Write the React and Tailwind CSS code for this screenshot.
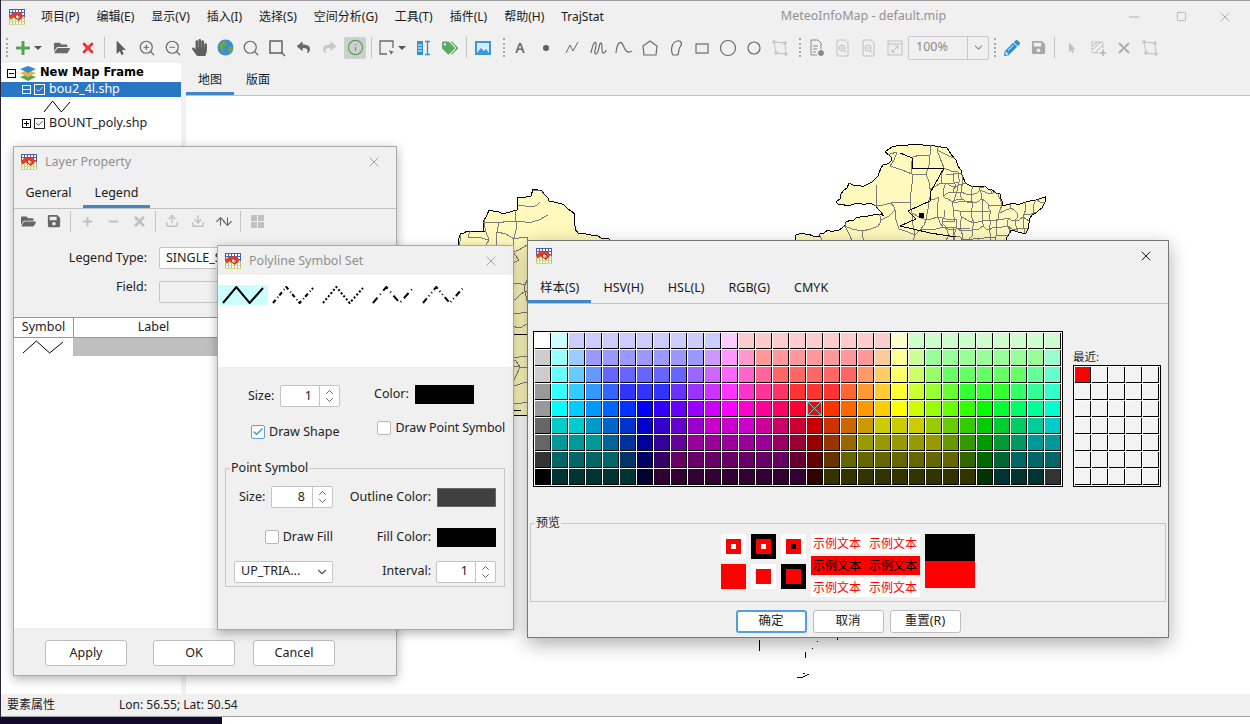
import {
  FaFolderOpen, FaSave, FaHandPaper, FaTags, FaPencilAlt, FaTimes, FaPlus, FaMinus, FaMousePointer, FaReply, FaShare,
} from "react-icons/fa";
import { ZoomIn, ZoomOut, Search, Info, X, Minus, Square, ChevronDown, ChevronUp, Check, ArrowUp, ArrowDown, Upload, Download } from "lucide-react";

const PALETTE = [
  "fff cff ccf ccf ccf ccf ccf ccf ccf ccf ccf fcf fcc fcc fcc fcc fcc fcc fcc fcc fcc ffc cfc cfc cfc cfc cfc cfc cfc cfc cfc",
  "ccc 9ff 9cf 99f 99f 99f 99f 99f 99f 99f c9f f9f f9c f99 f99 f99 f99 f99 f99 f99 fc9 ff9 cf9 9f9 9f9 9f9 9f9 9f9 9f9 9f9 9fc",
  "ccc 6ff 6cf 69f 66f 66f 66f 66f 66f 96f c6f f6f f6c f69 f66 f66 f66 f66 f66 f96 fc6 ff6 cf6 9f6 6f6 6f6 6f6 6f6 6f6 6f9 6fc",
  "999 3ff 3cf 39f 36f 33f 33f 33f 63f 93f c3f f3f f3c f39 f36 f33 f33 f33 f63 f93 fc3 ff3 cf3 9f3 6f3 3f3 3f3 3f3 3f6 3f9 3fc",
  "999 0ff 0cf 09f 06f 03f 00f 30f 60f 90f c0f f0f f0c f09 f06 f03 f00 f30 f60 f90 fc0 ff0 cf0 9f0 6f0 3f0 0f0 0f3 0f6 0f9 0fc",
  "666 0cc 0cc 09c 06c 03c 00c 30c 60c 90c c0c c0c c0c c09 c06 c03 c00 c30 c60 c90 cc0 cc0 cc0 9c0 6c0 3c0 0c0 0c3 0c6 0c9 0cc",
  "666 099 099 099 069 039 009 309 609 909 909 909 909 909 906 903 900 930 960 990 990 990 990 990 690 390 090 093 096 099 099",
  "333 066 066 066 066 036 006 306 606 606 606 606 606 606 606 603 600 630 660 660 660 660 660 660 660 360 060 063 066 066 066",
  "000 033 033 033 033 033 003 303 303 303 303 303 303 303 303 303 300 330 330 330 330 330 330 330 330 330 030 033 033 033 333",
].map((r) => r.split(" "));

function AppIcon() {
  const top = [0, 3, 6, 9, 12, 15];
  return (
    <svg width="16" height="16" viewBox="0 0 16 16" className="shrink-0">
      <rect width="16" height="16" fill="#fff" />
      {top.map((v) => (
        <g key={v}>
          <path d={`M${v + 0.5} 0V8`} stroke="#4a5fb0" />
          <path d={`M${v + 0.5} 8V16`} stroke="#b5c47a" />
          <path d={`M0 ${v + 0.5}H16`} stroke={v < 8 ? "#4a5fb0" : "#d3d97c"} />
        </g>
      ))}
      <path d="M0.500 9C0.500 5 4 3 7 4L10 2.500L15 7L10 12L7 10L5 8.500L3 9L2 11Z" fill="#ea3a22" />
      <path d="M8 5.500L11.500 8L9 10.500L6 8Z" fill="#fff" stroke="#6b2a12" strokeWidth="0.800" />
      <path d="M8.500 7.500h1.500v1.500H8.500z" fill="#f28a2c" />
    </svg>
  );
}

function Grip() {
  return <div className="h-[19px] border-l-2 border-dotted border-[#a8a8a8]" />;
}

function Slot({ children, className = "" }) {
  return <div className={`w-[26px] h-full flex items-center justify-center shrink-0 ${className}`}>{children}</div>;
}

function Sep() {
  return (
    <div className="w-[6px] h-full flex items-center justify-center shrink-0">
      <div className="w-px h-[21px] bg-[#c4c4c4]" />
    </div>
  );
}

function Caret() {
  return <div className="w-0 h-0 border-x-[4px] border-x-transparent border-t-[4px] border-t-[#555]" />;
}

function Shape({ children, color = "#6a6a6a", width = 1.2, w = 18 }) {
  return (
    <svg width={w} height="18" viewBox="0 0 18 18" fill="none" stroke={color} strokeWidth={width}>
      {children}
    </svg>
  );
}

function Toolbar() {
  const dis = "#c0c0c0";
  return (
    <div className="h-[31px] flex items-center shrink-0 bg-[#f0f0f0]">
      <div className="w-[12px] pl-[5px] flex items-center"><Grip /></div>
      <div className="w-[36px] h-full flex items-center gap-[3px] pl-[2px]">
        <FaPlus className="text-[#52a552] text-[16px]" />
        <Caret />
      </div>
      <Slot><FaFolderOpen className="text-[#6a6a6a] text-[16px]" /></Slot>
      <Slot><FaTimes className="text-[#e5383b] text-[16px]" /></Slot>
      <Sep />
      <Slot className="ml-[1px]"><FaMousePointer className="text-[#5f5f5f] text-[14px]" /></Slot>
      <Slot><ZoomIn size={18} color="#6a6a6a" strokeWidth={1.6} /></Slot>
      <Slot><ZoomOut size={18} color="#6a6a6a" strokeWidth={1.6} /></Slot>
      <Slot><FaHandPaper className="text-[#5f5f5f] text-[17px]" /></Slot>
      <Slot>
        <svg width="17" height="17" viewBox="0 0 17 17">
          <circle cx="8.500" cy="8.500" r="8" fill="#3d8fd1" />
          <path d="M3 4l4-2 3 2-1 3-3 1 1 3-2 2-2-4zM11 8l4-1 1 3-3 4-2-2z" fill="#6da544" />
        </svg>
      </Slot>
      <Slot><Search size={18} color="#6a6a6a" strokeWidth={1.6} /></Slot>
      <Slot>
        <Shape color="#6a6a6a" width="1.6">
          <rect x="2" y="2" width="12" height="12" />
          <path d="M13 13l4 4" />
        </Shape>
      </Slot>
      <Slot><FaReply className="text-[#6a6a6a] text-[13px]" /></Slot>
      <Slot><FaShare className="text-[#c8c8c8] text-[13px]" /></Slot>
      <Slot><div className="w-[22px] h-[22px] rounded-[2px] bg-[#cfcfcf] flex items-center justify-center"><Info size={17} color="#52a552" strokeWidth={1.7} /></div></Slot>
      <Sep />
      <div className="w-[37px] h-full flex items-center gap-[2px] pl-[4px] shrink-0">
        <Shape color="#6a6a6a" width="1.3">
          <path d="M9 15H2V2h13v7" />
          <path d="M11 11l5 2-2 1-1 2z" fill="#6a6a6a" stroke="none" />
        </Shape>
        <Caret />
      </div>
      <Slot>
        <svg width="14" height="16" viewBox="0 0 14 16">
          <rect x="0" y="1" width="6" height="14" fill="#2f8fd0" />
          <path d="M1 5h4M1 8h4M1 11h4" stroke="#fff" />
          <path d="M8 1.500h5M8 14.500h5M10.500 2v12" stroke="#2f8fd0" strokeWidth="1.300" />
        </svg>
      </Slot>
      <Slot><FaTags className="text-[#5fa85f] text-[16px]" /></Slot>
      <Sep />
      <Slot className="ml-[1px]">
        <svg width="16" height="14" viewBox="0 0 16 14">
          <rect width="16" height="14" fill="#3c98d6" />
          <rect x="2" y="2" width="12" height="10" fill="#d6ecf9" />
          <path d="M2 12l4-5 3 3 2-2 3 4z" fill="#3c98d6" />
        </svg>
      </Slot>
      <div className="w-[11px] pl-[7px] shrink-0"><Grip /></div>
      <Slot><span className="text-[14px] font-semibold text-[#6a6a6a]">A</span></Slot>
      <Slot><div className="w-[6px] h-[6px] rounded-full bg-[#606060]" /></Slot>
      <Slot><Shape width="1"><path d="M3 14L7 6l3 6 5-9" /></Shape></Slot>
      <Slot><Shape><path d="M2 14C4 4 6 2 7 4s-3 11 0 11 3-12 5-11 0 10 2 10 3-2 3-3" /></Shape></Slot>
      <Slot><Shape><path d="M1 14C2 3 6 1 8 6s4 9 9 6" /></Shape></Slot>
      <Slot><Shape><path d="M9 2l7 5-1 9H3L2 7z" /></Shape></Slot>
      <Slot><Shape><path d="M6 16C3 11 5 3 10 2c4-1 6 2 3 6s0 8-3 8z" /></Shape></Slot>
      <Slot><Shape><rect x="3" y="5" width="12" height="9" /></Shape></Slot>
      <Slot><Shape><circle cx="9" cy="9" r="7.500" /></Shape></Slot>
      <Slot><Shape><circle cx="9" cy="9" r="6" /></Shape></Slot>
      <Slot><Shape color={dis} width="1"><path d="M3 3l11 1 1 11-10-1z" /><rect x="2" y="2" width="2" height="2" /><rect x="13" y="3" width="2" height="2" /><rect x="14" y="14" width="2" height="2" /><rect x="4" y="13" width="2" height="2" /></Shape></Slot>
      <div className="w-[11px] pl-[6px] shrink-0"><Grip /></div>
      <Slot><Shape color="#8a8a8a" width="1"><path d="M3 1h7l3 3v6M3 1v15h6" /><path d="M5 7h5M5 10h4M5 13h3" /><circle cx="13" cy="14" r="2.500" fill="#8a8a8a" /></Shape></Slot>
      <Slot><Shape color={dis} width="1"><path d="M3 1h8l3 3v13H3z" /><circle cx="8" cy="9" r="3" /><path d="M6.500 9h3M8 7.500v3M10 11l2 3" /></Shape></Slot>
      <Slot><Shape color={dis} width="1"><path d="M3 1h8l3 3v13H3z" /><circle cx="8" cy="9" r="3" /><path d="M6.500 9h3M10 11l2 3" /></Shape></Slot>
      <Slot><Shape color={dis} width="1"><rect x="2" y="2" width="14" height="14" /><path d="M2 5h14M6 13l6-6M9 7h3v3M6 10v3h3" /></Shape></Slot>
      <div className="w-[81px] h-[24px] border border-[#c8c8c8] rounded-[2px] flex items-center shrink-0">
        <span className="flex-1 pl-[7px] text-[12.5px] text-[#8c8c8c]">100%</span>
        <div className="w-[21px] h-full border-l border-[#c8c8c8] flex items-center justify-center"><ChevronDown size={13} color="#8c8c8c" /></div>
      </div>
      <div className="w-[10px] pl-[5px] shrink-0"><Grip /></div>
      <Slot><FaPencilAlt className="text-[#2f8fd0] text-[16px]" /></Slot>
      <Slot><FaSave className="text-[#a8a8a8] text-[15px]" /></Slot>
      <Sep />
      <Slot className="ml-[2px]"><FaMousePointer className="text-[#c0c0c0] text-[10px]" /></Slot>
      <Slot><Shape color="#b8b8b8" width="1"><rect x="3" y="3" width="11" height="11" strokeDasharray="2 1" /><path d="M3 7l6-4M3 11l9-8M6 14l8-8" /><path d="M14 11v6M11 14h6" strokeWidth="1.600" /></Shape></Slot>
      <Slot><X size={18} color="#ababab" strokeWidth={2.4} /></Slot>
      <Slot><Shape color={dis} width="1"><path d="M3 3l11 1 1 11-10-1z" /><rect x="2" y="2" width="2" height="2" /><rect x="13" y="3" width="2" height="2" /><rect x="14" y="14" width="2" height="2" /><rect x="4" y="13" width="2" height="2" /></Shape></Slot>
    </div>
  );
}

function Tabs({ items, active = 0, h = "h-[31px]", pad = "px-3", size = "text-[12.5px]" }) {
  return (
    <div className={`${h} flex border-b border-[#c2c2c2] shrink-0`}>
      {items.map((t, i) => (
        <div key={t} className={`${pad} ${size} h-full flex items-center text-[#1a1a1a] ${i === active ? "border-b-[3px] border-[#4087c8] pt-[5px] -mb-px" : "pt-[2px]"}`}>
          {t}
        </div>
      ))}
    </div>
  );
}

function Zig({ w, h, dash, sw = 1, color = "#000" }) {
  const a = w / 3;
  return (
    <svg width={w + 2} height={h + 2} viewBox={`-1 -1 ${w + 2} ${h + 2}`} className="shrink-0">
      <polyline points={`0,${h} ${a},0 ${2 * a},${h} ${w},1`} fill="none" stroke={color} strokeWidth={sw} strokeDasharray={dash} />
    </svg>
  );
}

function Spinner({ value, w }) {
  return (
    <div className={`${w} h-[22px] bg-white border border-[#c4c4c4] rounded-[2px] flex shrink-0`}>
      <div className="flex-1 flex items-center justify-end pr-[7px] text-[12.5px]">{value}</div>
      <div className="w-[20px] border-l border-[#c4c4c4] flex flex-col items-center justify-center">
        <ChevronUp size={13} color="#666" className="-mb-[2px]" />
        <ChevronDown size={13} color="#666" className="-mt-[2px]" />
      </div>
    </div>
  );
}

function CheckBox({ checked, label, className = "" }) {
  return (
    <div className={`flex items-center gap-[4px] text-[12.5px] text-[#222] ${className}`}>
      <div className={`w-[14px] h-[14px] bg-white rounded-[2px] border flex items-center justify-center ${checked ? "border-[#5a9fe0]" : "border-[#b8b8b8]"}`}>
        {checked && <Check size={12} color="#4a94dc" strokeWidth={3} />}
      </div>
      <span>{label}</span>
    </div>
  );
}

function TreeBox({ open }) {
  return (
    <div className="w-[9px] h-[9px] border border-black relative shrink-0 bg-white">
      <div className="absolute left-[1px] right-[1px] top-[3px] h-px bg-black" />
      {!open && <div className="absolute top-[1px] bottom-[1px] left-[3px] w-px bg-black" />}
    </div>
  );
}

function TreeCheck() {
  return (
    <div className="w-[11px] h-[11px] border border-[#222] bg-white flex items-center justify-center shrink-0">
      <Check size={9} color="#111" strokeWidth={2} />
    </div>
  );
}

function Tree() {
  return (
    <div className="w-[180px] bg-white text-[12.5px] shrink-0 pt-[1px]">
      <div className="h-[18px] flex items-center pl-[6px]">
        <TreeBox open />
        <svg width="16" height="15" viewBox="0 0 16 15" className="ml-[4px] shrink-0">
          <path d="M8 8l8 3-8 4-8-4z" fill="#5aa55a" />
          <path d="M8 4l8 3-8 4-8-4z" fill="#f2b134" />
          <path d="M8 0l8 3-8 4-8-4z" fill="#2f8fd0" />
        </svg>
        <span className="ml-[4px] font-bold text-black [font-family:'DejaVu_Sans',sans-serif] text-[11.5px]">New Map Frame</span>
      </div>
      <div className="h-[15px] bg-[#2777c5] flex items-center pl-[21px]">
        <div className="border border-white"><div className="w-[7px] h-[7px] relative"><div className="absolute left-0 right-0 top-[3px] h-px bg-white" /></div></div>
        <div className="ml-[3px] w-[11px] h-[11px] border border-white flex items-center justify-center"><Check size={9} color="#fff" strokeWidth={2} /></div>
        <span className="ml-[4px] text-white">bou2_4l.shp</span>
      </div>
      <div className="h-[18px] flex items-center pl-[42px]"><Zig w={26} h={11} /></div>
      <div className="h-[17px] flex items-center pl-[21px]">
        <TreeBox />
        <div className="ml-[3px]"><TreeCheck /></div>
        <span className="ml-[4px] text-[#222]">BOUNT_poly.shp</span>
      </div>
    </div>
  );
}

// noisy outline and province mesh for the map drawing
function makeRand(seed) {
  let s = seed;
  return () => {
    s = (Math.imul(s, 1103515245) + 12345) & 0x7fffffff;
    return (s >> 8) / 0x7fffff;
  };
}

const toPage = ([x, y]) => [460 + x * 0.3827, 135 + y / 3];

function rough(points, seed) {
  const r = makeRand(seed);
  const out = [];
  points.map(toPage).forEach((p, i, all) => {
    const q = all[(i + 1) % all.length];
    const n = Math.max(1, Math.round(Math.hypot(q[0] - p[0], q[1] - p[1]) / 4));
    for (let k = 0; k < n; k++) {
      const t = k / n;
      out.push(`${Math.round(p[0] + (q[0] - p[0]) * t + r() * 2 - 1)},${Math.round(p[1] + (q[1] - p[1]) * t + r() * 2 - 1)}`);
    }
  });
  return out.join(" ");
}

function mesh(x0, y0, x1, y1, s, seed, skip = 0.2) {
  const r = makeRand(seed);
  const pts = {};
  const at = (i, j) => {
    const k = `${i}_${j}`;
    if (!pts[k]) pts[k] = [x0 + i * s + (r() - 0.5) * s * 0.7, y0 + j * s + (r() - 0.5) * s * 0.7];
    return pts[k];
  };
  let d = "";
  for (let i = 0; i * s < x1 - x0; i++) {
    for (let j = 0; j * s < y1 - y0; j++) {
      const a = at(i, j);
      [at(i + 1, j), at(i, j + 1)].forEach((b) => {
        if (r() > skip) {
          const mx = (a[0] + b[0]) / 2 + r() * 3 - 1.5;
          const my = (a[1] + b[1]) / 2 + r() * 3 - 1.5;
          d += `M${a[0].toFixed(0)} ${a[1].toFixed(0)}L${mx.toFixed(0)} ${my.toFixed(0)}L${b[0].toFixed(0)} ${b[1].toFixed(0)}`;
        }
      });
    }
  }
  return d;
}

const RIGHT_SHAPE = [[875,315],[880,298],[900,295],[935,305],[960,288],[990,285],[1010,262],[1045,245],[1080,240],[1108,240],[1095,222],[1075,205],[1040,205],[1020,212],[990,210],[985,200],[1015,145],[1050,155],[1085,135],[1100,100],[1130,75],[1112,50],[1130,35],[1150,30],[1210,27],[1270,40],[1295,75],[1308,105],[1325,150],[1370,155],[1410,180],[1415,210],[1465,205],[1530,188],[1518,220],[1490,250],[1480,295],[1440,285],[1420,330],[875,330]];
const LEFT_SHAPE = [[-5,330],[0,295],[40,288],[60,290],[58,270],[78,225],[130,235],[150,225],[150,190],[185,180],[190,165],[215,168],[235,195],[275,210],[300,240],[298,270],[305,295],[340,298],[390,310],[400,360],[260,840],[100,840],[-5,500]];

function MapView() {
  return (
    <svg viewBox="186 96 1064 598" className="absolute inset-0 w-full h-full" shapeRendering="crispEdges">
      <defs>
        <clipPath id="clipRight"><polygon points={rough(RIGHT_SHAPE, 7)} /></clipPath>
        <clipPath id="clipLeft"><polygon points={rough(LEFT_SHAPE, 11)} /></clipPath>
      </defs>
      <polygon points={rough(LEFT_SHAPE, 11)} fill="#fff9bd" stroke="#000" />
      <g clipPath="url(#clipLeft)" fill="none">
        <path d={mesh(440, 190, 540, 420, 15, 21, 0.3)} stroke="#7c7c7c" />
        <path d="M510 334H530M513 410h8" stroke="#000" />
      </g>
      <polygon points={rough(RIGHT_SHAPE, 7)} fill="#fff9bd" stroke="#000" />
      <g clipPath="url(#clipRight)" fill="none">
        <path d={mesh(820, 140, 960, 250, 15, 5, 0.3)} stroke="#7c7c7c" />
        <path d={mesh(945, 175, 1050, 250, 9, 9, 0.1)} stroke="#7c7c7c" />
        <path d="M900 153l12 5v10h32l-14 25v8l-22 10 8 8-16 7 30 7 26 4" stroke="#000" />
        <rect x="919" y="213" width="4" height="4" fill="#000" stroke="#000" />
      </g>
      <path d="M759.500 640v11M817 641h1M838 638l-1 2M812 648h1M805 652l1 3-1 3M797 678l6-1 6-3M803 673l2 1" stroke="#000" fill="none" />
    </svg>
  );
}

function DialogButton({ w, h = "h-[26px]", children, primary }) {
  return (
    <div className={`${w} ${h} bg-white rounded-[3px] flex items-center justify-center text-[12.5px] text-[#222] ${primary ? "border-2 border-[#4f9ee6]" : "border border-[#bdbdbd]"}`}>
      {children}
    </div>
  );
}

function LayerProperty() {
  return (
    <div className="absolute left-[13px] top-[146px] w-[384px] h-[530px] bg-[#f0f0f0] border border-[#a8a8a8] shadow-[0_3px_10px_rgba(0,0,0,0.3)] flex flex-col">
      <div className="h-[30px] flex items-center pl-[7px] pr-[14px] shrink-0">
        <AppIcon />
        <span className="ml-[8px] text-[12.5px] text-[#8f8f8f]">Layer Property</span>
        <X size={16} color="#8f8f8f" strokeWidth={1.2} className="ml-auto" />
      </div>
      <Tabs items={["General", "Legend"]} active={1} h="h-[32px]" pad="px-[11.5px]" />
      <div className="h-[26px] flex items-center pl-[1px] pb-[2px] shrink-0">
        <Slot><FaFolderOpen className="text-[#666] text-[15px]" /></Slot>
        <Slot><FaSave className="text-[#666] text-[14px]" /></Slot>
        <Sep />
        <Slot className="ml-[1px]"><FaPlus className="text-[#c0c0c0] text-[11px]" /></Slot>
        <Slot><FaMinus className="text-[#c0c0c0] text-[11px]" /></Slot>
        <Slot><FaTimes className="text-[#c0c0c0] text-[15px]" /></Slot>
        <Sep />
        <Slot className="ml-[1px]"><Upload size={14} color="#c0c0c0" strokeWidth={2.4} /></Slot>
        <Slot><Download size={14} color="#c0c0c0" strokeWidth={2.4} /></Slot>
        <Slot><ArrowUp size={13} color="#666" className="-mr-[3px]" /><ArrowDown size={13} color="#666" className="-ml-[3px]" /></Slot>
        <Sep />
        <Slot className="ml-[1px]">
          <div className="grid grid-cols-2 gap-px">
            <div className="w-[6px] h-[6px] bg-[#c0c0c0]" /><div className="w-[6px] h-[6px] bg-[#c0c0c0]" />
            <div className="w-[6px] h-[6px] bg-[#c0c0c0]" /><div className="w-[6px] h-[6px] bg-[#c0c0c0]" />
          </div>
        </Slot>
      </div>
      <div className="h-[82px] pt-[12px] pl-[10px] flex flex-col gap-[12px] shrink-0 text-[12.5px] text-[#222]">
        <div className="flex items-center gap-[12px]">
          <span className="w-[123px] text-right">Legend Type:</span>
          <div className="w-[200px] h-[22px] bg-white border border-[#c4c4c4] rounded-[2px] pl-[6px] flex items-center">SINGLE_S</div>
        </div>
        <div className="flex items-start gap-[12px]">
          <span className="w-[123px] text-right -mt-[3px]">Field:</span>
          <div className="w-[200px] h-[22px] bg-[#f0f0f0] border border-[#c4c4c4] rounded-[2px]" />
        </div>
      </div>
      <div className="flex-1 bg-white flex flex-col">
        <div className="h-[21px] flex -ml-px text-[12.5px] text-[#222] shrink-0">
          <div className="w-[61px] border border-[#64a2e0] flex items-center justify-center">Symbol</div>
          <div className="w-[160px] border-y border-r border-[#64a2e0] flex items-center justify-center">Label</div>
          <div className="flex-1 border-y border-r border-[#64a2e0]" />
        </div>
        <div className="h-[18px] flex -ml-px shrink-0">
          <div className="w-[60px] flex items-center justify-center"><Zig w={40} h={12} /></div>
          <div className="flex-1 bg-[#bfbfbf]" />
        </div>
      </div>
      <div className="h-[47px] flex items-start pt-[12px] pl-[31px] shrink-0">
        <DialogButton w="w-[82px]">Apply</DialogButton>
        <DialogButton w="w-[82px] ml-[26px]">OK</DialogButton>
        <DialogButton w="w-[82px] ml-[18px]">Cancel</DialogButton>
      </div>
    </div>
  );
}

function PolylineDialog() {
  const dashes = [undefined, "4 3 1 2", "2 2", "7 4 1 4", "6 3 1 3 1 3"];
  return (
    <div className="absolute left-[217px] top-[245px] w-[297px] h-[385px] bg-[#f0f0f0] border border-[#a8a8a8] shadow-[0_3px_10px_rgba(0,0,0,0.3)] flex flex-col">
      <div className="h-[29px] flex items-center pl-[7px] pr-[14px] pt-[1px] shrink-0">
        <AppIcon />
        <span className="ml-[8px] text-[12.5px] text-[#8f8f8f]">Polyline Symbol Set</span>
        <X size={16} color="#8f8f8f" strokeWidth={1.2} className="ml-auto" />
      </div>
      <div className="h-[92px] bg-white pt-[10px] flex items-start shrink-0">
        {dashes.map((d, i) => (
          <div key={i} className={`w-[50px] h-[20px] flex items-center justify-center ${i === 0 ? "bg-[#ccffff]" : ""}`}>
            <Zig w={40} h={16} dash={d} sw={2} />
          </div>
        ))}
      </div>
      <div className="flex-1 flex flex-col text-[12.5px] text-[#222]">
        <div className="h-[22px] mt-[18px] pl-[30px] flex items-center">
          <span className="w-[32px] mt-[1px]">Size:</span>
          <Spinner value="1" w="w-[60px]" />
          <span className="ml-[34px] -mt-[3px]">Color:</span>
          <div className="ml-[6px] w-[59px] h-[19px] bg-black -mt-[3px]" />
        </div>
        <div className="h-[22px] mt-[12px] pl-[33px] flex items-start">
          <CheckBox checked label="Draw Shape" className="mt-[4px]" />
          <CheckBox label="Draw Point Symbol" className="ml-[38px] tracking-[-0.1px]" />
        </div>
        <fieldset className="mx-[7px] mt-[21px] h-[125px] w-[280px] border border-[#c8c8c8] pl-[6px] pr-[8px]">
          <legend className="ml-[-2px] px-[1px] text-[12.5px] leading-[12px]">Point Symbol</legend>
          <div className="h-[22px] mt-[12px] flex items-center">
            <span className="ml-[7px] w-[32px]">Size:</span>
            <Spinner value="8" w="w-[62px]" />
            <span className="w-[98px] text-right">Outline Color:</span>
            <div className="ml-[6px] w-[59px] h-[19px] bg-[#404040] border border-[#666]" />
          </div>
          <div className="h-[20px] mt-[19px] flex items-center">
            <div className="w-[101px] flex justify-end"><CheckBox label="Draw Fill" /></div>
            <span className="w-[98px] text-right">Fill Color:</span>
            <div className="ml-[6px] w-[59px] h-[19px] bg-black" />
          </div>
          <div className="h-[23px] mt-[13px] flex items-center">
            <div className="w-[99px] h-[22px] ml-[2px] bg-white border border-[#c4c4c4] rounded-[2px] flex items-center pl-[6px]">
              UP_TRIA...
              <ChevronDown size={14} color="#555" className="ml-auto mr-[3px]" />
            </div>
            <span className="w-[98px] text-right">Interval:</span>
            <div className="ml-[5px]"><Spinner value="1" w="w-[60px]" /></div>
          </div>
        </fieldset>
      </div>
    </div>
  );
}

function SwatchGrid() {
  return (
    <div className="border border-black bg-white pl-px pt-px w-[530px] shrink-0">
      {PALETTE.map((row, r) => (
        <div key={r} className="flex">
          {row.map((c, i) => (
            <div key={i} className="w-[17px] h-[17px] pr-px pb-px shrink-0">
              <div className="w-[16px] h-[16px] border-r border-b border-black relative" style={{ backgroundColor: `#${c}` }}>
                {r === 4 && i === 16 && (
                  <svg width="15" height="15" viewBox="0 0 15 15" className="absolute inset-0">
                    <rect x="0.500" y="0.500" width="14" height="14" fill="none" stroke="#00ffff" />
                    <path d="M1 1l13 13M14 1L1 14" stroke="#00ffff" />
                  </svg>
                )}
              </div>
            </div>
          ))}
        </div>
      ))}
    </div>
  );
}

function RecentGrid() {
  const cells = Array.from({ length: 35 });
  return (
    <div className="w-[88px] border border-black bg-white pl-px pt-px grid grid-cols-[repeat(5,17px)] shrink-0">
      {cells.map((_, i) => (
        <div key={i} className="w-[17px] h-[17px] pr-px pb-px">
          <div className={`w-[16px] h-[16px] border-r border-b border-black ${i === 0 ? "bg-[#ff0000]" : "bg-[#f3f3f3]"}`} />
        </div>
      ))}
    </div>
  );
}

function PreviewSquare({ outer, mid, inner }) {
  return (
    <div className={`w-[25px] h-[25px] flex items-center justify-center ${outer}`}>
      {mid && (
        <div className={`w-[15px] h-[15px] flex items-center justify-center ${mid}`}>
          {inner && <div className={`w-[5px] h-[5px] ${inner}`} />}
        </div>
      )}
    </div>
  );
}

function SampleText({ className }) {
  return (
    <div className={`h-[19px] w-[109px] flex items-center justify-center gap-[8px] text-[12px] leading-none ${className}`}>
      <span>示例文本</span>
      <span>示例文本</span>
    </div>
  );
}

function ColorDialog() {
  return (
    <div className="absolute left-[527px] top-[240px] w-[642px] h-[398px] bg-[#f0f0f0] border border-[#777] shadow-[0_6px_18px_rgba(0,0,0,0.32)] flex flex-col">
      <div className="h-[30px] flex items-center pl-[8px] pr-[14px] shrink-0">
        <AppIcon />
        <X size={16} color="#111" strokeWidth={1.4} className="ml-auto" />
      </div>
      <Tabs items={["样本(S)", "HSV(H)", "HSL(L)", "RGB(G)", "CMYK"]} h="h-[33px]" />
      <div className="flex pl-[5px] pt-[27px] shrink-0">
        <SwatchGrid />
        <div className="ml-[10px] w-[88px] flex flex-col justify-end">
          <div className="text-[11.5px] leading-[14px] mb-[1px] text-[#222]">最近:</div>
          <RecentGrid />
        </div>
      </div>
      <fieldset className="mx-[2px] mt-[29px] h-[86px] border border-[#c8c8c8] flex justify-center">
        <legend className="ml-[4px] px-[1px] text-[12px] leading-[14px] text-[#222]">预览</legend>
        <div className="flex items-start gap-[5px] ml-[-1px] mt-[4px]">
          <div className="grid grid-cols-3 gap-x-[5px] gap-y-[5px]">
            <PreviewSquare outer="bg-white" mid="bg-[#ff0000]" inner="bg-white" />
            <PreviewSquare outer="bg-black" mid="bg-[#ff0000]" inner="bg-white" />
            <PreviewSquare outer="bg-white" mid="bg-[#ff0000]" inner="bg-black" />
            <PreviewSquare outer="bg-[#ff0000]" />
            <PreviewSquare outer="bg-white" mid="bg-[#ff0000]" />
            <PreviewSquare outer="bg-black" mid="bg-[#ff0000]" />
          </div>
          <div className="flex flex-col gap-[3px]">
            <SampleText className="bg-white text-[#ff0000]" />
            <SampleText className="bg-[#ff0000] text-black" />
            <SampleText className="bg-white text-[#ff0000]" />
          </div>
          <div className="w-[50px]">
            <div className="h-[27px] bg-black" />
            <div className="h-[27px] bg-[#ff0000]" />
          </div>
        </div>
      </fieldset>
      <div className="flex justify-center gap-[6px] mt-[8px]">
        <DialogButton w="w-[71px]" h="h-[23px]" primary>确定</DialogButton>
        <DialogButton w="w-[71px]" h="h-[23px]">取消</DialogButton>
        <DialogButton w="w-[71px]" h="h-[23px]">重置(R)</DialogButton>
      </div>
    </div>
  );
}

export default function App() {
  const menus = ["项目(P)", "编辑(E)", "显示(V)", "插入(I)", "选择(S)", "空间分析(G)", "工具(T)", "插件(L)", "帮助(H)", "TrajStat"];
  return (
    <div className="relative w-[1250px] h-[724px] overflow-hidden bg-white text-black [font-family:'Noto_Sans','Noto_Sans_CJK_SC',sans-serif]">
      <div className="h-[717px] ml-px flex flex-col bg-[#f0f0f0] border-t border-b border-[#a0a0a0]">
        <div className="h-[31px] flex items-center pl-[8px] shrink-0">
          <AppIcon />
          <div className="ml-[16px] flex gap-[17px] text-[12px] text-[#1a1a1a]">
            {menus.map((m) => <span key={m}>{m}</span>)}
          </div>
          <span className="ml-[177px] text-[12.5px] text-[#929292]">MeteoInfoMap - default.mip</span>
          <div className="ml-auto flex items-center pr-[17px]">
            <Minus size={16} color="#909090" strokeWidth={1} />
            <Square size={11} color="#909090" strokeWidth={1.2} className="ml-[34px]" />
            <X size={16} color="#909090" strokeWidth={1} className="ml-[30px]" />
          </div>
        </div>
        <Toolbar />
        <div className="flex-1 flex min-h-0">
          <Tree />
          <div className="w-[5px] shrink-0 bg-[#f0f0f0]" />
          <div className="flex-1 flex flex-col min-w-0">
            <Tabs items={["地图", "版面"]} h="h-[33px]" size="text-[12px]" />
            <div className="flex-1 relative bg-white"><MapView /></div>
          </div>
        </div>
        <div className="h-[22px] flex items-center pl-[6px] text-[12px] text-[#222] shrink-0">
          <span className="w-[112px]">要素属性</span>
          <span>Lon: 56.55; Lat: 50.54</span>
        </div>
      </div>
      <div className="absolute left-0 top-0 w-px h-[717px] bg-[#2a2438]" />
      <div className="absolute left-0 top-[717px] w-[222px] h-[7px] bg-[#120a28]" />
      <LayerProperty />
      <PolylineDialog />
      <ColorDialog />
    </div>
  );
}
